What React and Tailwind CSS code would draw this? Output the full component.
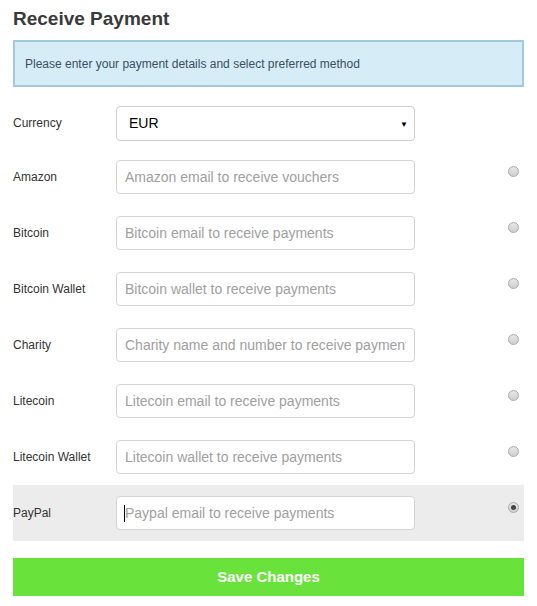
import { useState } from "react";

const methods = [
  { key: "amazon", label: "Amazon", placeholder: "Amazon email to receive vouchers" },
  { key: "bitcoin", label: "Bitcoin", placeholder: "Bitcoin email to receive payments" },
  { key: "bitcoinWallet", label: "Bitcoin Wallet", placeholder: "Bitcoin wallet to receive payments" },
  { key: "charity", label: "Charity", placeholder: "Charity name and number to receive payments" },
  { key: "litecoin", label: "Litecoin", placeholder: "Litecoin email to receive payments" },
  { key: "litecoinWallet", label: "Litecoin Wallet", placeholder: "Litecoin wallet to receive payments" },
  { key: "paypal", label: "PayPal", placeholder: "Paypal email to receive payments" },
];

function Radio({ checked, onClick }) {
  return (
    <button
      type="button"
      onClick={onClick}
      className="w-[11px] h-[11px] rounded-full border border-[#a9a9a9] bg-gradient-to-b from-[#e6e6e6] to-[#cfcfcf] flex items-center justify-center"
    >
      {checked && <span className="w-[5px] h-[5px] rounded-full bg-[#444]" />}
    </button>
  );
}

export default function App() {
  const [selected, setSelected] = useState("paypal");

  return (
    <div className="bg-white min-h-screen px-[13px] pt-[7px] [font-family:'Liberation_Sans',Arial,sans-serif] text-[#333]">
      <h2 className="text-[19px] font-bold leading-[24px] text-[#3a3a3a]">Receive Payment</h2>

      {/* info box */}
      <div className="mt-[9px] h-[47px] border-2 border-[#9fcbdc] bg-[#d6ecf7] flex items-center px-[10px]">
        <p className="text-[12px] text-[#3a4f63]">Please enter your payment details and select preferred method</p>
      </div>

      {/* currency */}
      <div className="flex items-center h-[52px] mt-[10px]">
        <label className="w-[103px] text-[12px]">Currency</label>
        <div className="relative w-[299px] h-[35px] border border-[#cfcfcf] rounded-[4px] bg-white flex items-center px-[12px]">
          <span className="text-[14px] text-black">EUR</span>
          <span className="absolute right-[6px] top-[12px] text-[8px] text-black">▼</span>
        </div>
      </div>

      {/* methods */}
      <div>
        {methods.map((m) => {
          const active = selected === m.key;
          return (
            <div
              key={m.key}
              className={`flex items-center h-[56px] ${active ? "bg-[#ececec]" : ""}`}
            >
              <label className="w-[103px] text-[12px]">{m.label}</label>
              <div className="relative">
                <input
                  type="text"
                  placeholder={m.placeholder}
                  className="w-[299px] h-[34px] border border-[#d4d4d4] rounded-[4px] bg-white px-[8px] [font-family:'Liberation_Sans',Arial,sans-serif] text-[14px] placeholder:text-[#a0a0a0] outline-none"
                />
                {active && <span className="absolute left-[8px] top-[9px] w-px h-[17px] bg-black" />}
              </div>
              <div className="flex-1 flex justify-end self-start pt-[17px] pr-[5px]">
                <Radio checked={active} onClick={() => setSelected(m.key)} />
              </div>
            </div>
          );
        })}
      </div>

      <button
        type="button"
        className="mt-[17px] w-full h-[38px] bg-[#69e33b] text-white text-[15px] font-bold"
      >
        Save Changes
      </button>
    </div>
  );
}
